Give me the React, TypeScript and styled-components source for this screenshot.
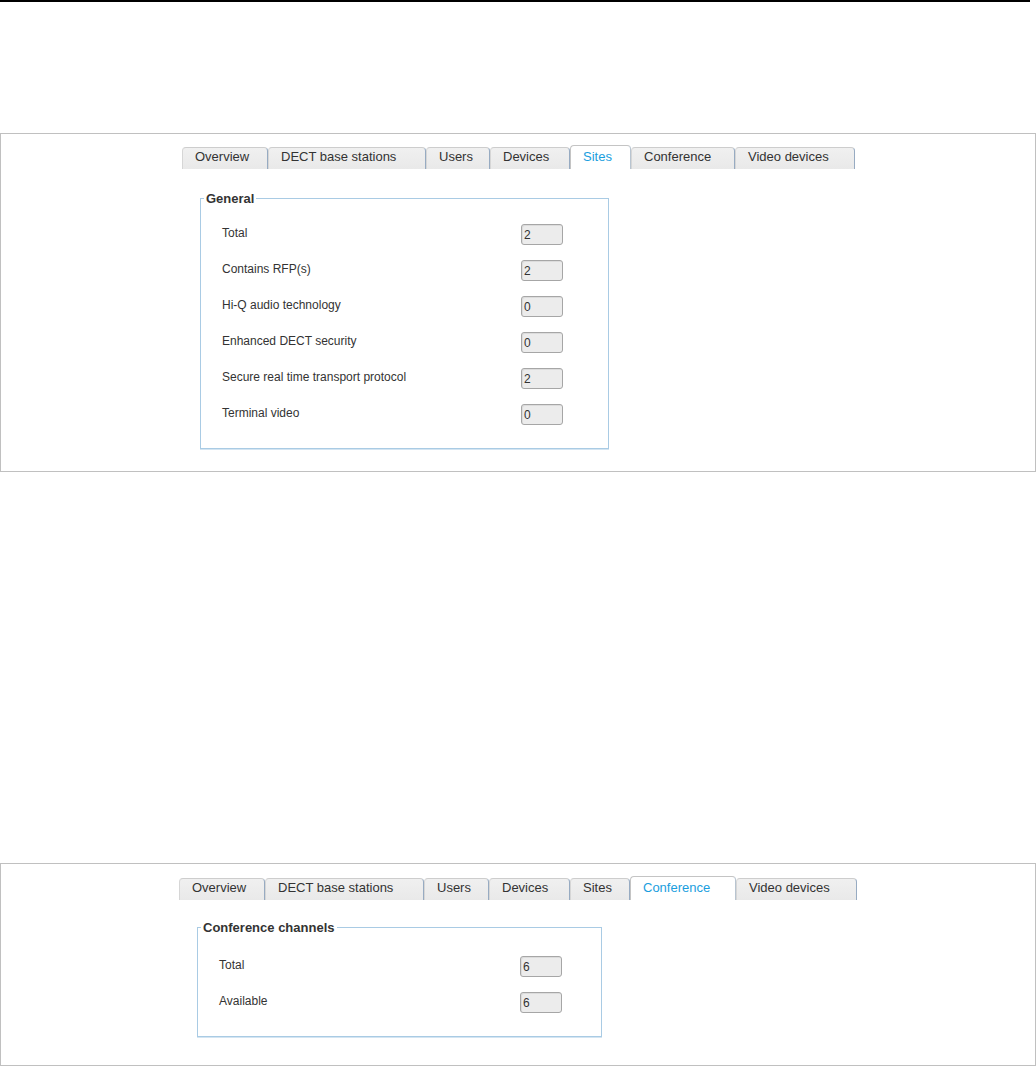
import React from 'react'
import styled, {createGlobalStyle} from 'styled-components'

const GlobalStyle = createGlobalStyle`
  html, body {
    margin: 0;
    padding: 0;
    background: #ffffff;
  }

  body {
    font-family: "Liberation Sans", Arial, sans-serif;
    color: #333333;
  }
`

const tabLabels = ['Overview', 'DECT base stations', 'Users', 'Devices', 'Sites', 'Conference', 'Video devices']

type Row = {label: string, value: string}

const sitesRows: Row[] = [
  {label: 'Total', value: '2'},
  {label: 'Contains RFP(s)', value: '2'},
  {label: 'Hi-Q audio technology', value: '0'},
  {label: 'Enhanced DECT security', value: '0'},
  {label: 'Secure real time transport protocol', value: '2'},
  {label: 'Terminal video', value: '0'},
]

const conferenceRows: Row[] = [
  {label: 'Total', value: '6'},
  {label: 'Available', value: '6'},
]

const Page = styled.div`
  width: 1036px;
  display: flex;
  flex-direction: column;
`

const TopRule = styled.div`
  width: 1030px;
  height: 2px;
  background: #000000;
`

const Panel = styled.section<{$top: number, $indent: number, $padTop: number, $padBottom: number}>`
  margin-top: ${p => p.$top}px;
  width: 1036px;
  box-sizing: border-box;
  border: 1px solid #c0c0c0;
  padding: ${p => p.$padTop}px 0 ${p => p.$padBottom}px ${p => p.$indent}px;
  display: flex;
  flex-direction: column;
  align-items: flex-start;
`

const TabBar = styled.nav`
  display: flex;
  align-items: flex-end;
  height: 24px;
`

const Tab = styled.div<{$active?: boolean, $width: number}>`
  box-sizing: border-box;
  width: ${p => p.$width}px;
  height: ${p => (p.$active ? 24 : 22)}px;
  padding: ${p => (p.$active ? 3 : 1)}px 0 0 12px;
  font-size: 13px;
  line-height: 16px;
  white-space: nowrap;
  color: ${p => (p.$active ? '#1a9ede' : '#333333')};
  background: ${p => (p.$active ? '#ffffff' : 'linear-gradient(#f0f0f0, #e9e9e9)')};
  border-top: 1px solid ${p => (p.$active ? '#c4c4c4' : '#cdcdcd')};
  border-left: 1px solid ${p => (p.$active ? '#c4c4c4' : '#d6d6d6')};
  border-right: 1px solid ${p => (p.$active ? '#b8c4d0' : '#97abc2')};
  border-radius: 4px 4px 0 0;
`

const Group = styled.fieldset<{$left: number, $width: number, $gap: number}>`
  margin: ${p => p.$gap}px 0 0 ${p => p.$left}px;
  width: ${p => p.$width}px;
  box-sizing: border-box;
  border: 1px solid #a9cbe4;
  box-shadow: 0 1px 0 #d4e5f2;
  padding: 0;
  min-width: 0;
`

const Legend = styled.legend`
  margin-left: 3px;
  padding: 0 2px;
  font-size: 13px;
  font-weight: bold;
  line-height: 15px;
  color: #333333;
`

const GroupBody = styled.div<{$padTop: number}>`
  padding: ${p => p.$padTop}px 0 23px 21px;
  display: flex;
  flex-direction: column;
  gap: 15px;
`

const FieldRow = styled.div<{$labelWidth: number}>`
  display: grid;
  grid-template-columns: ${p => p.$labelWidth}px 42px;
  align-items: center;
  height: 21px;
`

const Label = styled.span`
  font-size: 12px;
  color: #333333;
  margin-top: -3px;
`

const ValueBox = styled.div`
  box-sizing: border-box;
  width: 42px;
  height: 21px;
  padding: 2px 0 0 2px;
  background: #ececec;
  border: 1px solid #a6a6a6;
  border-radius: 3px;
  box-shadow: inset 1px 1px 0 #dcdcdc;
  font-size: 12px;
  line-height: 16px;
  color: #333333;
`

type SectionProps = {
  active: string
  tabWidths: number[]
  title: string
  rows: Row[]
  top: number
  indent: number
  padTop: number
  padBottom: number
  groupLeft: number
  groupWidth: number
  groupGap: number
  groupPadTop: number
  labelWidth: number
}

const StatsPanel = (props: SectionProps) => (
  <Panel $top={props.top} $indent={props.indent} $padTop={props.padTop} $padBottom={props.padBottom}>
    <TabBar>
      {tabLabels.map((label, i) => (
        <Tab key={label} $width={props.tabWidths[i]} $active={label === props.active}>{label}</Tab>
      ))}
    </TabBar>
    <Group $left={props.groupLeft} $width={props.groupWidth} $gap={props.groupGap}>
      <Legend>{props.title}</Legend>
      <GroupBody $padTop={props.groupPadTop}>
        {props.rows.map(r => (
          <FieldRow key={r.label} $labelWidth={props.labelWidth}>
            <Label>{r.label}</Label>
            <ValueBox>{r.value}</ValueBox>
          </FieldRow>
        ))}
      </GroupBody>
    </Group>
  </Panel>
)

const App = () => (
  <Page>
    <GlobalStyle />
    <TopRule />
    <StatsPanel
      active="Sites"
      tabWidths={[86, 158, 64, 80, 61, 104, 120]}
      title="General"
      rows={sitesRows}
      top={131}
      indent={181}
      padTop={11}
      padBottom={22}
      groupLeft={18}
      groupWidth={409}
      groupGap={22}
      groupPadTop={18}
      labelWidth={299}
    />
    <StatsPanel
      active="Conference"
      tabWidths={[86, 159, 65, 81, 60, 106, 121]}
      title="Conference channels"
      rows={conferenceRows}
      top={391}
      indent={178}
      padTop={12}
      padBottom={28}
      groupLeft={18}
      groupWidth={405}
      groupGap={20}
      groupPadTop={21}
      labelWidth={301}
    />
  </Page>
)

export default App
